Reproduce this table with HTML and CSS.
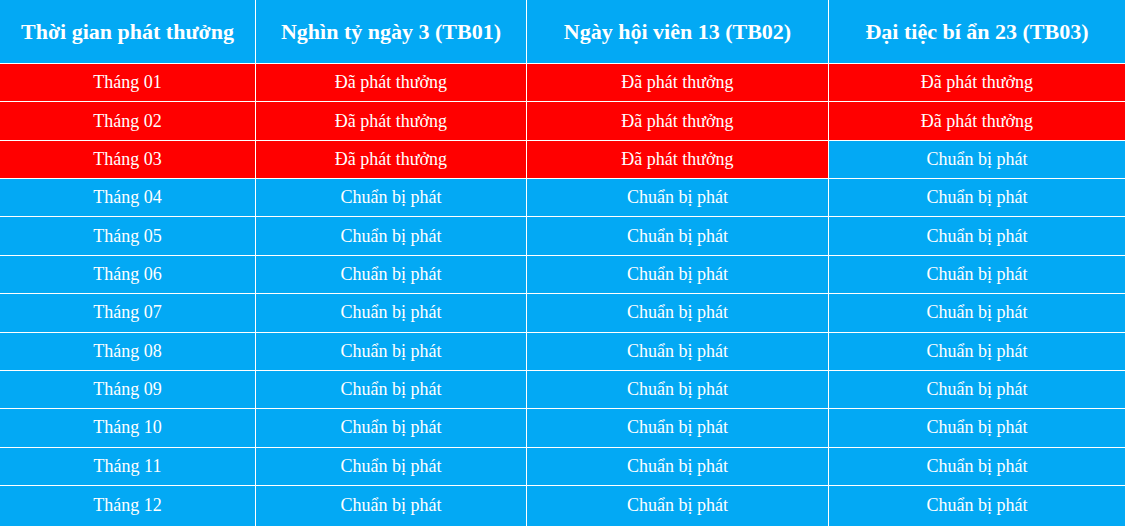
FILE: index.html
```html
<!DOCTYPE html>
<html lang="vi">
<head>
<meta charset="utf-8">
<title>Lịch phát thưởng</title>
<link rel="stylesheet" href="styles.css">
</head>
<body>
<div class="table">
  <div class="cell head">Thời gian phát thưởng</div>
  <div class="cell head">Nghìn tỷ ngày 3 (TB01)</div>
  <div class="cell head">Ngày hội viên 13 (TB02)</div>
  <div class="cell head">Đại tiệc bí ẩn 23 (TB03)</div>

  <div class="cell done">Tháng 01</div>
  <div class="cell done">Đã phát thưởng</div>
  <div class="cell done">Đã phát thưởng</div>
  <div class="cell done">Đã phát thưởng</div>

  <div class="cell done">Tháng 02</div>
  <div class="cell done">Đã phát thưởng</div>
  <div class="cell done">Đã phát thưởng</div>
  <div class="cell done">Đã phát thưởng</div>

  <div class="cell done">Tháng 03</div>
  <div class="cell done">Đã phát thưởng</div>
  <div class="cell done">Đã phát thưởng</div>
  <div class="cell">Chuẩn bị phát</div>

  <div class="cell">Tháng 04</div>
  <div class="cell">Chuẩn bị phát</div>
  <div class="cell">Chuẩn bị phát</div>
  <div class="cell">Chuẩn bị phát</div>

  <div class="cell">Tháng 05</div>
  <div class="cell">Chuẩn bị phát</div>
  <div class="cell">Chuẩn bị phát</div>
  <div class="cell">Chuẩn bị phát</div>

  <div class="cell">Tháng 06</div>
  <div class="cell">Chuẩn bị phát</div>
  <div class="cell">Chuẩn bị phát</div>
  <div class="cell">Chuẩn bị phát</div>

  <div class="cell">Tháng 07</div>
  <div class="cell">Chuẩn bị phát</div>
  <div class="cell">Chuẩn bị phát</div>
  <div class="cell">Chuẩn bị phát</div>

  <div class="cell">Tháng 08</div>
  <div class="cell">Chuẩn bị phát</div>
  <div class="cell">Chuẩn bị phát</div>
  <div class="cell">Chuẩn bị phát</div>

  <div class="cell">Tháng 09</div>
  <div class="cell">Chuẩn bị phát</div>
  <div class="cell">Chuẩn bị phát</div>
  <div class="cell">Chuẩn bị phát</div>

  <div class="cell">Tháng 10</div>
  <div class="cell">Chuẩn bị phát</div>
  <div class="cell">Chuẩn bị phát</div>
  <div class="cell">Chuẩn bị phát</div>

  <div class="cell">Tháng 11</div>
  <div class="cell">Chuẩn bị phát</div>
  <div class="cell">Chuẩn bị phát</div>
  <div class="cell">Chuẩn bị phát</div>

  <div class="cell">Tháng 12</div>
  <div class="cell">Chuẩn bị phát</div>
  <div class="cell">Chuẩn bị phát</div>
  <div class="cell">Chuẩn bị phát</div>
</div>
</body>
</html>
```
FILE: styles.css
```css
html, body {
  margin: 0;
  padding: 0;
  background: #03a9f4;
}

.table {
  display: grid;
  grid-template-columns: 255px 270px 301px 1fr;
  grid-template-rows: 63px repeat(11, 37.36px) 1fr;
  gap: 1px;
  height: 526px;
  width: 1125px;
  background: #ffffff;
  font-family: "Liberation Serif", "Times New Roman", serif;
  color: #ffffff;
}

.cell {
  display: flex;
  align-items: center;
  justify-content: center;
  background: #03a9f4;
  font-size: 18px;
  white-space: nowrap;
}

.cell.head {
  font-size: 22px;
  font-weight: bold;
}

.cell.done {
  background: #ff0000;
}
```
